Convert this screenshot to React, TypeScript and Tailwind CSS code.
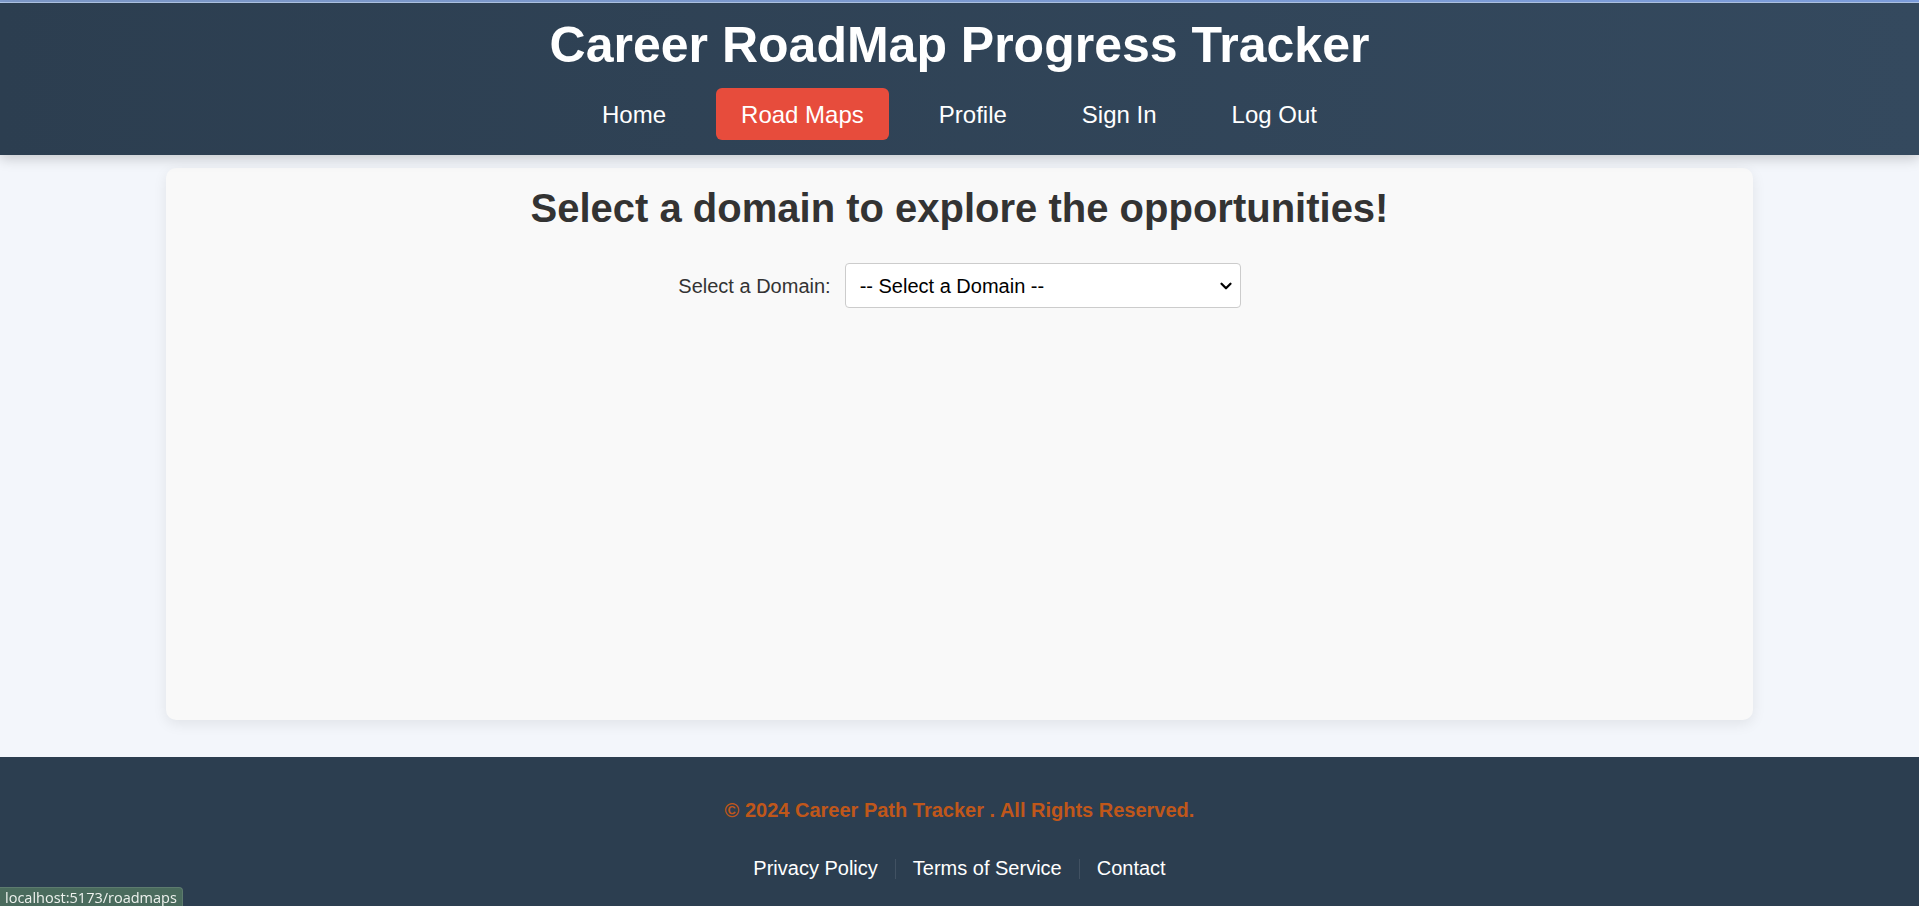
import { ChevronDown } from 'lucide-react';

const navLinks = [
  { label: 'Home', active: false },
  { label: 'Road Maps', active: true },
  { label: 'Profile', active: false },
  { label: 'Sign In', active: false },
  { label: 'Log Out', active: false },
];

const footerLinks = ['Privacy Policy', 'Terms of Service', 'Contact'];

export default function App() {
  return (
    <div className="min-h-screen bg-[#f3f6fb] font-['Liberation_Sans',Arial,sans-serif]">
      {/* Window edge */}
      <div className="h-[3px] bg-gradient-to-r from-[#7f9bcb] to-[#80a2e2] border-b border-[#b3c9ea]" />

      {/* Header */}
      <header className="relative z-10 bg-gradient-to-r from-[#2c3e50] to-[#34495e] pt-[13px] pb-[15px] shadow-[0_4px_12px_rgba(0,0,0,0.18)]">
        <h1 className="text-center text-[50px] leading-[58px] font-bold text-white">Career RoadMap Progress Tracker</h1>
        <nav className="mt-[14px] flex justify-center gap-[25px]">
          {navLinks.map((link) => (
            <a
              key={link.label}
              href="#"
              className={
                link.active
                  ? 'px-[25px] pt-[13px] pb-[11px] text-[24px] leading-[28px] text-white rounded-md bg-[#e74c3c]'
                  : 'px-[25px] pt-[13px] pb-[11px] text-[24px] leading-[28px] text-white rounded-md'
              }
            >
              {link.label}
            </a>
          ))}
        </nav>
      </header>

      {/* Main */}
      <main className="pt-[13px] pb-[37px]">
        <div className="mx-auto w-[1587px] h-[552px] bg-[#f9f9f9] rounded-[10px] shadow-[0_4px_14px_rgba(0,0,0,0.08)] pt-[17px]">
          <h2 className="text-center text-[40px] leading-[46px] font-bold text-[#333]">
            Select a domain to explore the opportunities!
          </h2>
          <div className="mt-[32px] flex items-center justify-center gap-[14px]">
            <label htmlFor="domain" className="text-[20px] text-[#333]">
              Select a Domain:
            </label>
            <div className="relative">
              <select
                id="domain"
                className="appearance-none w-[396px] h-[45px] pl-[14px] pr-10 text-[20px] text-black bg-white border border-[#ccc] rounded-[4px] outline-none"
              >
                <option>-- Select a Domain --</option>
                <option>Web Development</option>
                <option>Data Science</option>
                <option>Cloud Computing</option>
              </select>
              <ChevronDown
                className="pointer-events-none absolute right-[6px] top-1/2 -translate-y-1/2 w-[18px] h-[18px] text-black"
                strokeWidth={3}
              />
            </div>
          </div>
        </div>
      </main>

      {/* Footer */}
      <footer className="bg-[#2c3e50] pt-[42px] pb-[26px] text-center">
        <p className="text-[20px] leading-[23px] font-bold text-[#c0571a]">© 2024 Career Path Tracker . All Rights Reserved.</p>
        <div className="mt-[35px] flex justify-center items-center">
          {footerLinks.map((link, idx) => (
            <div key={link} className="flex items-center">
              {idx > 0 && <span className="mx-[17px] h-[20px] w-px bg-white/10" />}
              <a href="#" className="text-[20px] leading-[23px] text-white">
                {link}
              </a>
            </div>
          ))}
        </div>
      </footer>

      {/* Status bubble */}
      <div className="fixed bottom-0 left-0 h-[19px] px-[5px] bg-[#4a6b5d] border-t border-r border-[#5d7b6e] rounded-tr-[4px] text-[14.5px] leading-[19px] text-[#eef2ee] font-['Open_Sans',sans-serif]">
        localhost:5173/roadmaps
      </div>
    </div>
  );
}
